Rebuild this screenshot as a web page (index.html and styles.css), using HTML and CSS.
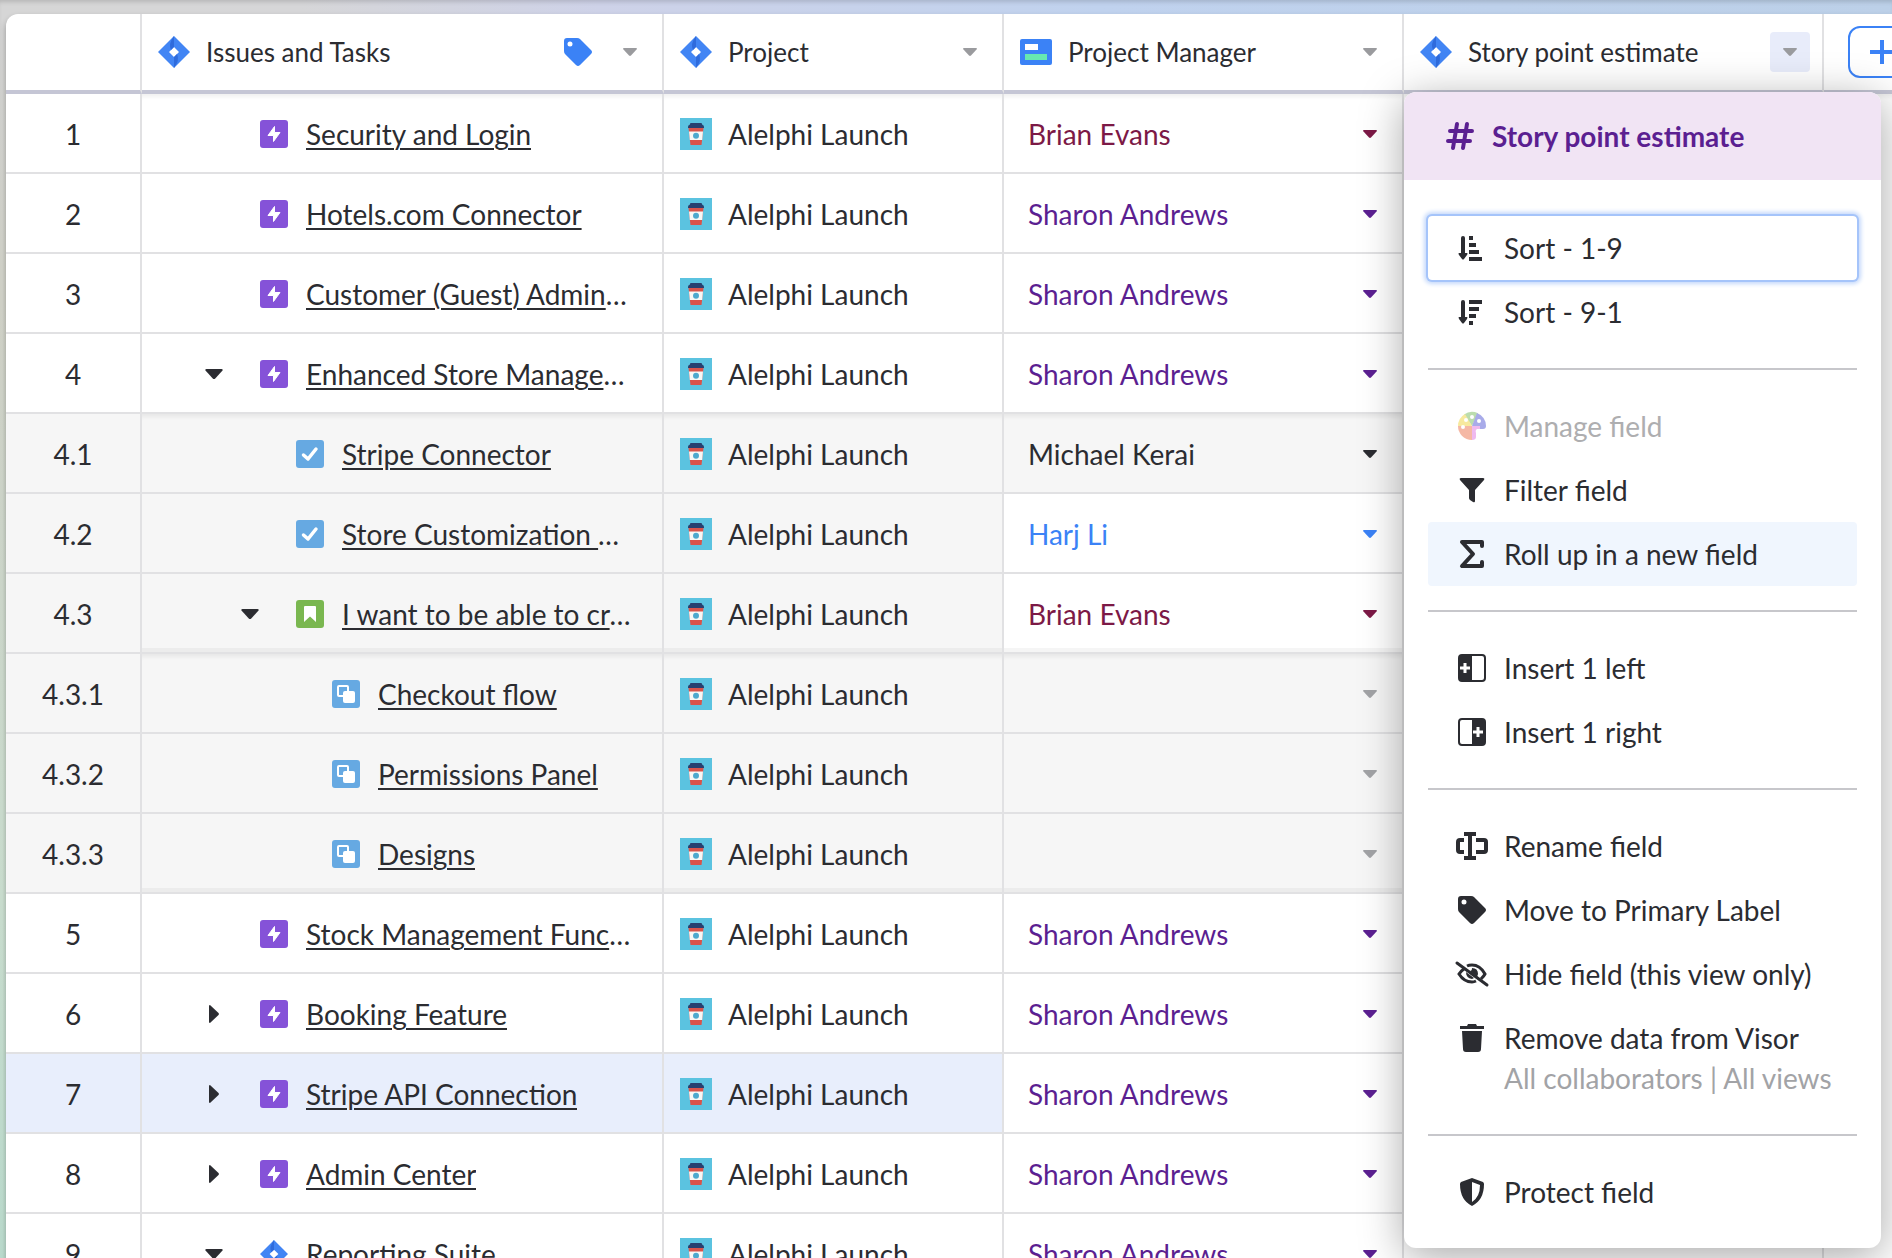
FILE: index.html
```html
<!DOCTYPE html>
<html lang="en">
    <head>
        <meta charset="UTF-8">
        <meta name="viewport" content="width=device-width, initial-scale=1.0">
        <title>Visor</title>
        <link rel="stylesheet" href="styles.css">
    </head>
    <body>
        <!-- icon shapes used more than once -->
        <svg class="sprite" aria-hidden="true">
            <symbol id="jira" viewBox="0 0 32 32">
                <path fill="#4285f4" fill-rule="evenodd" d="M16 0L32 16L16 32L0 16ZM16 11L11 16L16 21L21 16Z"/>
                <path fill="#2f6bdc" d="M16 0L16 11L13 14Q10 8 16 0Z"/>
                <path fill="#2f6bdc" d="M16 32L16 21L19 18Q22 24 16 32Z"/>
            </symbol>
            <symbol id="tag" viewBox="0 0 28 28">
                <path fill="currentColor" fill-rule="evenodd" d="M3 0H13Q15 0 16 1L27 12Q29 14 27 16L16 27Q14 29 12 27L1 16Q0 15 0 13V3Q0 0 3 0ZM6 3.500A2.500 2.500 0 1 0 6 8.500A2.500 2.500 0 1 0 6 3.500Z"/>
            </symbol>
            <symbol id="epic" viewBox="0 0 28 28">
                <rect width="28" height="28" rx="3" fill="#8552d8"/>
                <path fill="#fff" d="M14.500 6.500V12.500H20L13.500 21.500V15.500H8Z" stroke="#fff" stroke-linejoin="round"/>
            </symbol>
            <symbol id="task" viewBox="0 0 28 28">
                <rect width="28" height="28" rx="3" fill="#66a9e2"/>
                <path fill="none" stroke="#fff" stroke-width="3.500" stroke-linecap="round" stroke-linejoin="round" d="M7.500 15L12 19L20 9"/>
            </symbol>
            <symbol id="story" viewBox="0 0 28 28">
                <rect width="28" height="28" rx="3" fill="#7ab750"/>
                <path fill="#fff" d="M9 6H19Q20 6 20 7V22L14 16.500L8 22V7Q8 6 9 6Z"/>
            </symbol>
            <symbol id="subtask" viewBox="0 0 28 28">
                <rect width="28" height="28" rx="3" fill="#66a9e2"/>
                <rect x="6" y="6" width="10" height="10" rx="1" fill="none" stroke="#fff" stroke-width="2"/>
                <rect x="11" y="11" width="12" height="12" rx="2" fill="#fff"/>
            </symbol>
            <symbol id="cup" viewBox="0 0 32 32">
                <rect width="32" height="32" fill="#5bc3e0"/>
                <path fill="#d9534a" d="M8.500 10H23.500L21.500 27H10.500Z"/>
                <path fill="#f8f8f6" d="M9 13.500H23L22.200 22H9.800Z"/>
                <circle cx="16" cy="17.700" r="3" fill="#4da9cf"/>
                <path fill="#28406f" d="M10.500 5H21.500L22.500 7Q24 7 24 9V10H8V9Q8 7 9.500 7Z"/>
            </symbol>
            <symbol id="down" viewBox="0 0 14 8">
                <path fill="currentColor" d="M1 0H13Q14 0 14 1L8 7.500Q7 8.300 6 7.500L0 1Q0 0 1 0Z"/>
            </symbol>
            <symbol id="right" viewBox="0 0 10 18">
                <path fill="currentColor" d="M0 1Q0 0 1 0L9.500 8Q10.300 9 9.500 10L1 18Q0 18 0 17Z"/>
            </symbol>
        </svg>

        <main class="sheet">
            <table class="grid">
                <colgroup>
                    <col class="col-num">
                    <col class="col-issue">
                    <col class="col-project">
                    <col class="col-manager">
                    <col class="col-points">
                    <col class="col-add">
                </colgroup>
                <thead>
                    <tr>
                        <th></th>
                        <th>
                            <div class="head">
                                <svg class="icon-lg"><use href="#jira"/></svg>
                                <span class="head-name">Issues and Tasks</span>
                                <svg class="icon primary-tag"><use href="#tag"/></svg>
                                <button class="head-btn" aria-label="Issues and Tasks options"><svg class="caret"><use href="#down"/></svg></button>
                            </div>
                        </th>
                        <th>
                            <div class="head">
                                <svg class="icon-lg"><use href="#jira"/></svg>
                                <span class="head-name">Project</span>
                                <button class="head-btn" aria-label="Project options"><svg class="caret"><use href="#down"/></svg></button>
                            </div>
                        </th>
                        <th>
                            <div class="head">
                                <svg class="icon-lg" viewBox="0 0 32 32">
                                    <rect y="3" width="32" height="26" rx="2" fill="#3b82f6"/>
                                    <rect x="5" y="8" width="13" height="6" fill="#fff"/>
                                    <rect x="5" y="18" width="22" height="6" fill="#67e8b0"/>
                                </svg>
                                <span class="head-name">Project Manager</span>
                                <button class="head-btn" aria-label="Project Manager options"><svg class="caret"><use href="#down"/></svg></button>
                            </div>
                        </th>
                        <th>
                            <div class="head">
                                <svg class="icon-lg"><use href="#jira"/></svg>
                                <span class="head-name">Story point estimate</span>
                                <button class="head-btn open" aria-label="Story point estimate options"><svg class="caret"><use href="#down"/></svg></button>
                            </div>
                        </th>
                        <th class="add">
                            <button class="add-btn" aria-label="Add field">
                                <svg class="icon" viewBox="0 0 28 28"><path stroke="#3b82f6" stroke-width="4" d="M14 2V26M2 14H26"/></svg>
                            </button>
                        </th>
                    </tr>
                </thead>
                <tbody id="rows"></tbody>
            </table>

            <div class="menu">
                <h2 class="menu-title">
                    <svg class="icon" viewBox="0 0 28 28"><path fill="none" stroke="currentColor" stroke-width="4" stroke-linecap="round" d="M11 2L7 26M21 2L17 26M4 9H26M2 19H24"/></svg>
                    Story point estimate
                </h2>
                <div class="menu-body">
                    <button class="item focused">
                        <svg class="icon" viewBox="0 0 28 28"><path stroke="currentColor" stroke-width="4" stroke-linecap="round" d="M5 4V22"/><path fill="currentColor" d="M1 19H9Q10 19 9 21L6 25Q5 26 4 25L1 21Q0 19 1 19Z"/><path stroke="currentColor" stroke-width="4" d="M11 4H15M11 11H18M11 18H21M11 25H24"/></svg>
                        <span>Sort - 1-9</span>
                    </button>
                    <button class="item">
                        <svg class="icon" viewBox="0 0 28 28"><path stroke="currentColor" stroke-width="4" stroke-linecap="round" d="M5 4V22"/><path fill="currentColor" d="M1 19H9Q10 19 9 21L6 25Q5 26 4 25L1 21Q0 19 1 19Z"/><path stroke="currentColor" stroke-width="4" d="M11 4H24M11 11H21M11 18H18M11 25H15"/></svg>
                        <span>Sort - 9-1</span>
                    </button>
                    <hr>
                    <button class="item" disabled>
                        <svg class="icon" viewBox="0 0 28 28">
                            <path fill="#8fc77a" d="M14 14L6 2.500A14 14 0 0 1 20 1.300Z"/>
                            <path fill="#6f74dc" d="M14 14L19 1A14 14 0 0 1 28 14Q28 17 25 17H20Z"/>
                            <path fill="#f2dc5e" d="M14 14L0 15A14 14 0 0 1 7 2Z"/>
                            <path fill="#f08a6a" d="M14 14L14 28A14 14 0 0 1 0 14Z"/>
                            <path fill="#e58be6" d="M14 14H22V17H19Q17 18 18 21V25Q18 28 14 28Z"/>
                            <g fill="#fff"><circle cx="5" cy="15" r="2"/><circle cx="8" cy="8" r="2"/><circle cx="14" cy="5" r="2"/><circle cx="21" cy="9" r="2"/></g>
                        </svg>
                        <span>Manage field</span>
                    </button>
                    <button class="item">
                        <svg class="icon" viewBox="0 0 28 28"><path fill="currentColor" d="M3 2H25Q27 2 26 4L17 14V25Q17 27 15 26L12 24Q11 23 11 22V14L2 4Q1 2 3 2Z"/></svg>
                        <span>Filter field</span>
                    </button>
                    <button class="item hovered">
                        <svg class="icon" viewBox="0 0 28 28"><path fill="none" stroke="currentColor" stroke-width="4" stroke-linecap="round" stroke-linejoin="round" d="M24 6V2H4L15 14L4 26H24V22"/></svg>
                        <span>Roll up in a new field</span>
                    </button>
                    <hr>
                    <button class="item">
                        <svg class="icon" viewBox="0 0 28 28"><rect x="1" y="1" width="26" height="26" rx="3" fill="none" stroke="currentColor" stroke-width="2"/><path fill="currentColor" d="M1 1H14V27H1Z"/><path stroke="#fff" stroke-width="3" d="M7 9V19M2 14H12"/></svg>
                        <span>Insert 1 left</span>
                    </button>
                    <button class="item">
                        <svg class="icon" viewBox="0 0 28 28"><rect x="1" y="1" width="26" height="26" rx="3" fill="none" stroke="currentColor" stroke-width="2"/><path fill="currentColor" d="M14 1H27V27H14Z"/><path stroke="#fff" stroke-width="3" d="M20 9V19M15 14H25"/></svg>
                        <span>Insert 1 right</span>
                    </button>
                    <hr>
                    <button class="item">
                        <svg class="icon" viewBox="0 0 28 28"><path fill="none" stroke="currentColor" stroke-width="4" d="M6 2H18M6 26H18M12 2V26M6 8H2Q0 8 0 10V18Q0 20 2 20H6M18 8H26Q28 8 28 10V18Q28 20 26 20H18"/></svg>
                        <span>Rename field</span>
                    </button>
                    <button class="item">
                        <svg class="icon"><use href="#tag"/></svg>
                        <span>Move to Primary Label</span>
                    </button>
                    <button class="item">
                        <svg class="icon" viewBox="0 0 28 28">
                            <path fill="none" stroke="currentColor" stroke-width="3" d="M7 8Q3 11 1 14Q6 22 14 22Q16 22 18 21M9 6Q11 5 14 5Q22 5 27 14Q26 16 23 19"/>
                            <path fill="currentColor" d="M8 12Q8 18 14 19L16 18ZM14 8Q20 8 20 14L19 17L12 11Q14 11 14 8Z"/>
                            <path stroke="currentColor" stroke-width="3" stroke-linecap="round" d="M-1 3L29 25"/>
                        </svg>
                        <span>Hide field (this view only)</span>
                    </button>
                    <button class="item">
                        <svg class="icon" viewBox="0 0 28 28"><path fill="currentColor" d="M2 2H9L10 0H18L19 2H26V5H2ZM4 7H24L23 25Q23 28 20 28H8Q5 28 5 25Z"/></svg>
                        <span>Remove data from Visor<small>All collaborators | All views</small></span>
                    </button>
                    <hr>
                    <button class="item">
                        <svg class="icon" viewBox="0 0 28 28"><path fill="currentColor" fill-rule="evenodd" d="M14 0L25 4Q26 5 26 6Q26 22 14 28Q2 22 2 6Q2 5 3 4ZM14 4V24Q22 19 22 7Z"/></svg>
                        <span>Protect field</span>
                    </button>
                </div>
            </div>
        </main>

        <script src="script.js"></script>
    </body>
</html>
```
FILE: styles.css
```css
* {
    margin: 0;
    padding: 0;
    box-sizing: border-box;
}

body {
    background: linear-gradient(180deg, transparent 20px, #d5d6cc 300px, #cfe3d4 900px, #bfe0d2 100%), linear-gradient(90deg, #d6d6d6 0, #d6d6d8 300px, #ced2e8 600px, #c0d2ee 1100px, #bcd0e8 100%);
    box-shadow: inset 0 4px 4px -2px rgba(0, 0, 0, 0.15);
    color: #2b2c31;
    font-family: Lato, sans-serif;
    font-size: 28px;
    line-height: 40px;
    height: 100vh;
    overflow: hidden;
}

button {
    font: inherit;
    color: inherit;
    background: none;
    border: none;
    cursor: pointer;
}

svg {
    display: block;
    flex: none;
    overflow: visible;
}

.sprite {
    position: absolute;
    width: 0;
    height: 0;
}

.icon {
    width: 28px;
    height: 28px;
}

.icon-lg {
    width: 32px;
    height: 32px;
}

.caret {
    width: 14px;
    height: 8px;
}

.sheet {
    position: relative;
    margin: 14px 0 0 6px;
    background: #fff;
    border-radius: 12px 0 0 0;
    box-shadow: 0 4px 6px rgba(0, 0, 0, 0.3);
}

/* grid */
.grid {
    width: 100%;
    table-layout: fixed;
    border-collapse: separate;
    border-spacing: 0;
}

.col-num {
    width: 136px;
}

.col-issue {
    width: 522px;
}

.col-project {
    width: 340px;
}

.col-manager {
    width: 400px;
}

.col-points {
    width: 420px;
}

th,
td {
    height: 80px;
    border-right: 2px solid #e1e1e3;
    border-bottom: 2px solid #e1e1e3;
    font-weight: 400;
    text-align: left;
}

th {
    border-bottom: 4px solid #c5c6d5;
    font-size: 26px;
}

td {
    padding-top: 2px;
}

tr > :last-child {
    border-right: none;
}

td:last-child {
    border-bottom: none;
}

.head {
    display: flex;
    align-items: center;
    gap: 16px;
    padding: 0 12px 0 16px;
}

.head-name {
    flex: 1;
}

.primary-tag {
    margin-right: 2px;
    color: #3b82f6;
}

.head-btn {
    display: flex;
    align-items: center;
    justify-content: center;
    width: 40px;
    height: 40px;
    border-radius: 4px;
    color: #9a9b9e;
}

.head-btn.open {
    background: #e8ecfa;
}

.add {
    padding-left: 24px;
}

.add-btn {
    display: flex;
    align-items: center;
    justify-content: center;
    width: 68px;
    height: 52px;
    border: 2px solid #3b82f6;
    border-radius: 12px;
}

.num {
    text-align: center;
}

.cell {
    display: flex;
    align-items: center;
    gap: 16px;
    padding: 0 16px;
}

.issue {
    gap: 18px;
    padding: 0 30px 0 56px;
}

.level-1 {
    padding-left: 92px;
}

.level-2 {
    padding-left: 128px;
}

.toggle {
    display: flex;
    flex: none;
    align-items: center;
    justify-content: center;
    width: 32px;
    height: 32px;
    margin-right: 12px;
}

.toggle .down {
    width: 18px;
    height: 10px;
}

.toggle .right {
    width: 10px;
    height: 18px;
}

.issue a {
    color: inherit;
    white-space: nowrap;
    overflow: hidden;
    text-overflow: ellipsis;
    text-decoration-thickness: 2px;
    text-underline-offset: 3px;
}

.manager {
    justify-content: space-between;
    padding: 0 25px 0 24px;
}

.child td:not(:last-child) {
    background: #f6f6f6;
}

.child td.set {
    background: #fff;
}

.selected td:nth-child(-n+3) {
    background: #e8eefc;
}

/* shade under the header and round an opened group */
tr:first-child td:not(.num),
.opens + .child td:not(.num, :last-child) {
    box-shadow: inset 0 6px 4px -3px rgba(0, 0, 0, 0.06);
}

.group-end td:not(.num, :last-child) {
    box-shadow: inset 0 -4px 0 rgba(0, 0, 0, 0.04);
}

.plum {
    color: #7c1946;
}

.purple {
    color: #5b1f91;
}

.blue {
    color: #3b82f6;
}

.empty {
    color: #a2a3a6;
}

/* field menu */
.menu {
    position: absolute;
    top: 78px;
    left: 1398px;
    width: 477px;
    background: #fff;
    border-radius: 12px;
    box-shadow: 0 8px 44px rgba(0, 0, 0, 0.35);
    overflow: hidden;
}

.menu-title {
    display: flex;
    align-items: center;
    gap: 18px;
    height: 88px;
    padding: 0 42px;
    background: #f1e4f4;
    color: #5b1f91;
    font-size: 28px;
    font-weight: 700;
}

.menu-body {
    padding: 36px 24px 24px;
}

.item {
    display: flex;
    align-items: flex-start;
    gap: 18px;
    width: 100%;
    padding: 12px 30px;
    border-radius: 4px;
    text-align: left;
    white-space: nowrap;
}

.item .icon {
    margin-top: 6px;
}

.item small {
    display: block;
    color: #a2a3a6;
    font-size: 28px;
}

.item:disabled {
    color: #aeaeb0;
}

.item:disabled .icon {
    opacity: 0.6;
}

.focused {
    box-shadow: 0 0 0 2px #a5c4fa, 0 0 4px 4px #c5d9fb;
}

.hovered {
    background: #f0f6fe;
}

hr {
    height: 2px;
    margin: 24px 0;
    border: none;
    background: #c7c7cb;
}
```
FILE: script.js
```js
const issues = [
    { num: '1', name: 'Security and Login', icon: 'epic', manager: 'Brian Evans' },
    { num: '2', name: 'Hotels.com Connector', icon: 'epic', manager: 'Sharon Andrews' },
    { num: '3', name: 'Customer (Guest) Administration', icon: 'epic', manager: 'Sharon Andrews' },
    { num: '4', name: 'Enhanced Store Management', icon: 'epic', manager: 'Sharon Andrews', toggle: 'down' },
    { num: '4.1', name: 'Stripe Connector', icon: 'task', manager: 'Michael Kerai' },
    { num: '4.2', name: 'Store Customization Options', icon: 'task', manager: 'Harj Li' },
    { num: '4.3', name: 'I want to be able to create', icon: 'story', manager: 'Brian Evans', toggle: 'down', groupEnd: true },
    { num: '4.3.1', name: 'Checkout flow', icon: 'subtask', manager: '' },
    { num: '4.3.2', name: 'Permissions Panel', icon: 'subtask', manager: '' },
    { num: '4.3.3', name: 'Designs', icon: 'subtask', manager: '', groupEnd: true },
    { num: '5', name: 'Stock Management Functions', icon: 'epic', manager: 'Sharon Andrews' },
    { num: '6', name: 'Booking Feature', icon: 'epic', manager: 'Sharon Andrews', toggle: 'right' },
    { num: '7', name: 'Stripe API Connection', icon: 'epic', manager: 'Sharon Andrews', toggle: 'right', selected: true },
    { num: '8', name: 'Admin Center', icon: 'epic', manager: 'Sharon Andrews', toggle: 'right' },
    { num: '9', name: 'Reporting Suite', icon: 'jira', manager: 'Sharon Andrews', toggle: 'down' }
];

const managerColors = {
    'Brian Evans': 'plum',
    'Sharon Andrews': 'purple',
    'Harj Li': 'blue',
    'Michael Kerai': '',
    '': 'empty'
};

document.getElementById('rows').innerHTML = issues.map(issue => {
    const level = issue.num.split('.').length - 1;
    const rowClass = [
        level ? 'child' : '',
        issue.selected ? 'selected' : '',
        issue.toggle === 'down' ? 'opens' : '',
        issue.groupEnd ? 'group-end' : ''
    ].join(' ');
    const color = managerColors[issue.manager];
    const toggle = issue.toggle
        ? `<button class="toggle" aria-label="Toggle ${issue.name}"><svg class="${issue.toggle}"><use href="#${issue.toggle}"/></svg></button>`
        : '<span class="toggle"></span>';

    return `
    <tr class="${rowClass}">
        <td class="num">${issue.num}</td>
        <td><div class="cell issue level-${level}">${toggle}<svg class="icon"><use href="#${issue.icon}"/></svg><a href="#">${issue.name}</a></div></td>
        <td><div class="cell"><svg class="icon-lg"><use href="#cup"/></svg>Alelphi Launch</div></td>
        <td class="${color === 'plum' || color === 'blue' ? 'set' : ''}"><div class="cell manager ${color}">${issue.manager}<span></span><svg class="caret"><use href="#down"/></svg></div></td>
        <td></td>
        <td></td>
    </tr>`;
}).join('');
```
